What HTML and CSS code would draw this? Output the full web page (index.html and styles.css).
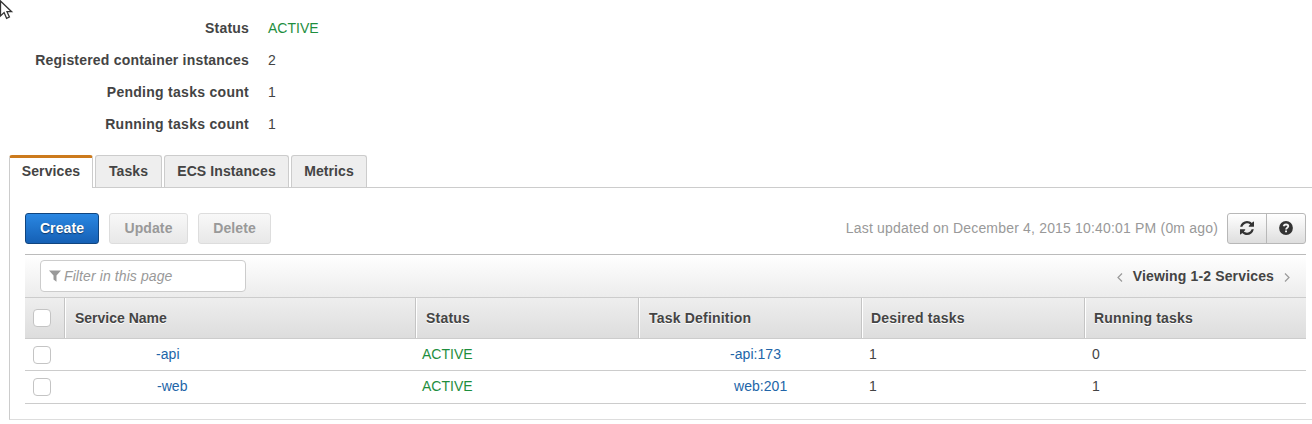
FILE: index.html
```html
<!DOCTYPE html>
<html lang="en">
<head>
<meta charset="utf-8">
<title>Cluster</title>
<link rel="stylesheet" href="styles.css">
</head>
<body>
<svg class="cursor" width="14" height="20" viewBox="0 0 14 20"><path d="M.5 1v15l3.600-3.400L6.600 18.300 9.400 17 7 11.700h4.600z" fill="#fff" stroke="#333" stroke-width="1.300"/></svg>
<dl class="details">
  <dt>Status</dt><dd class="active-text">ACTIVE</dd>
  <dt>Registered container instances</dt><dd>2</dd>
  <dt class="wide">Pending tasks count</dt><dd>1</dd>
  <dt class="wide">Running tasks count</dt><dd>1</dd>
</dl>
<nav class="tabs">
  <div class="tab tab-services selected"><span>Services</span></div>
  <div class="tab tab-tasks"><span>Tasks</span></div>
  <div class="tab tab-instances"><span>ECS Instances</span></div>
  <div class="tab tab-metrics"><span>Metrics</span></div>
</nav>
<main class="panel">
  <div class="toolbar">
    <button class="btn primary">Create</button>
    <button class="btn update" disabled>Update</button>
    <button class="btn delete" disabled>Delete</button>
    <span class="updated">Last updated on December 4, 2015 10:40:01 PM (0m ago)</span>
    <div class="icon-group">
      <button class="icon-btn" aria-label="Refresh"><svg width="14" height="14" viewBox="0 0 1536 1536"><path fill="#333" d="M1511 928q0 5-1 7-64 268-268 434.500T764 1536q-146 0-282.500-55T238 1324l-129 129q-19 19-45 19t-45-19-19-45V960q0-26 19-45t45-19h448q26 0 45 19t19 45-19 45l-137 137q71 66 161 102t187 36q134 0 250-65t186-179q11-17 53-117 8-23 30-23h192q13 0 22.500 9.500t9.500 22.500zm25-800v448q0 26-19 45t-45 19h-448q-26 0-45-19t-19-45 19-45l138-138Q969 256 768 256q-134 0-250 65T332 500q-11 17-53 117-8 23-30 23H50q-13 0-22.500-9.500T18 608v-7q65-268 270-434.500T768 0q146 0 284 55.500T1297 212l130-129q19-19 45-19t45 19 19 45z"/></svg></button>
      <button class="icon-btn" aria-label="Help"><svg width="14" height="14" viewBox="0 0 14 14"><circle cx="7" cy="7" r="6.900" fill="#333"/><path d="M4.600 5.300C5 3.900 6 3.500 7 3.500c1.300 0 2.300.7 2.300 1.800C9.300 6.700 7.100 6.800 7.100 8.400" fill="none" stroke="#f3f3f3" stroke-width="1.800"/><path d="M6.100 9.400h1.900v1.800H6.100z" fill="#f3f3f3"/></svg></button>
    </div>
  </div>
  <div class="filter-bar">
    <div class="filter"><svg width="12" height="12" viewBox="0 0 12 12"><path d="M0 .4h12L7.500 5.500v6.300L4.500 9.400V5.500z" fill="#999"/></svg><span>Filter in this page</span></div>
    <div class="pager">
      <svg width="6" height="9" viewBox="0 0 6 9"><path d="M5 .5l-4 4 4 4" fill="none" stroke="#999" stroke-width="1.200"/></svg>
      <span>Viewing 1-2 Services</span>
      <svg width="6" height="9" viewBox="0 0 6 9"><path d="M1 .5l4 4-4 4" fill="none" stroke="#999" stroke-width="1.200"/></svg>
    </div>
  </div>
  <div class="row head">
    <div class="check-cell"><span class="check"></span></div>
    <div class="snug">Service Name</div><div>Status</div><div>Task Definition</div><div class="count">Desired tasks</div><div class="count">Running tasks</div>
  </div>
  <div class="row body-row">
    <div class="check-cell"><span class="check"></span></div>
    <div class="link name-api">-api</div><div class="active-text">ACTIVE</div><div class="link def-api">-api:173</div><div>1</div><div>0</div>
  </div>
  <div class="row body-row last">
    <div class="check-cell"><span class="check"></span></div>
    <div class="link name-web">-web</div><div class="active-text">ACTIVE</div><div class="link def-web">web:201</div><div>1</div><div>1</div>
  </div>
</main>
</body>
</html>
```

FILE: styles.css
```css
* { box-sizing: border-box; }
body {
  margin: 0;
  height: 424px;
  overflow: hidden;
  background: #fff;
  color: #444;
  font: 14px/20px "Liberation Sans", Arial, sans-serif;
  letter-spacing: .2px;
}
svg { display: block; flex: none; }
.cursor { position: absolute; left: 0; top: 0; }
.details {
  display: grid;
  grid-template-columns: 249px 1fr;
  grid-auto-rows: 32px;
  column-gap: 19px;
  align-items: center;
  margin: 0;
  padding-top: 12px;
  height: 155px;
}
.details dt { text-align: right; font-weight: bold; }
.details .wide { letter-spacing: .28px; }
.details dd { margin: 0; }
.active-text { color: #1e8e3e; letter-spacing: 0; }

.tabs {
  display: flex;
  gap: 2px;
  height: 32px;
  padding-left: 9px;
}
.tab {
  height: 32px;
  padding-top: 5px;
  border: 1px solid #ccc;
  border-bottom: 0;
  border-radius: 3px 3px 0 0;
  background: #eee;
  font-weight: bold;
  letter-spacing: .1px;
  text-align: center;
}
.tab-services { width: 84px; }
.tab-tasks { width: 67px; }
.tab-instances { width: 125px; }
.tab-metrics { width: 76px; }
.tab.selected {
  position: relative;
  height: 33px;
  padding-top: 3px;
  border-top: 3px solid #cc7a1c;
  background: #fff;
}

.panel {
  height: 233px;
  margin-left: 9px;
  padding: 25px 0 0 15px;
  border: 1px solid #ccc;
  border-right: 0;
  border-bottom-color: #ddd;
}
.toolbar {
  display: flex;
  align-items: center;
  height: 31px;
  margin-right: 6px;
}
.btn {
  height: 31px;
  margin: 0 10px 0 0;
  padding: 0 0 2px;
  border: 1px solid #ddd;
  border-radius: 3px;
  background: linear-gradient(#f8f8f8, #e8e8e8);
  color: #999;
  font: bold 14px/20px "Liberation Sans", Arial, sans-serif;
  letter-spacing: .1px;
}
.update { width: 79px; }
.delete { width: 73px; }
.primary {
  width: 74px;
  border-color: #10457f;
  background: linear-gradient(#2a87e2, #1560b5);
  color: #fff;
  text-shadow: 0 1px 1px #123a68;
}
.updated { margin: 0 0 2px auto; color: #999; letter-spacing: .18px; }
.icon-group {
  display: flex;
  width: 79px;
  height: 31px;
  margin-left: 9px;
  border: 1px solid #b8b8b8;
  border-radius: 3px;
  background: linear-gradient(#fff, #dedede);
}
.icon-btn {
  display: flex;
  flex: 1;
  align-items: center;
  justify-content: center;
  padding: 0 0 2px;
  border: 0;
  background: none;
}
.icon-btn + .icon-btn { border-left: 1px solid #b8b8b8; }

.filter-bar {
  display: flex;
  align-items: center;
  justify-content: space-between;
  height: 43px;
  margin: 10px 6px 0 0;
  padding: 0 16px 0 15px;
  border-top: 1px solid #bbb;
  background: linear-gradient(#fff, #ececec);
}
.filter {
  display: flex;
  align-items: center;
  gap: 3px;
  width: 206px;
  height: 32px;
  padding-left: 8px;
  border: 1px solid #ccc;
  border-radius: 4px;
  background: #fff;
  color: #999;
  font-style: italic;
  letter-spacing: .1px;
}
.pager {
  display: flex;
  align-items: center;
  gap: 10px;
  font-weight: bold;
  letter-spacing: .15px;
  white-space: nowrap;
}
.pager svg { margin-top: 3px; }

.row {
  display: grid;
  grid-template-columns: 40px 351px 223px 223px 223px 1fr;
  margin-right: 6px;
}
.row > div { display: flex; align-items: center; }
.head {
  height: 42px;
  border-top: 1px solid #ccc;
  border-bottom: 1px solid #ccc;
  background: linear-gradient(#eee, #ddd);
  font-weight: bold;
  text-shadow: 0 1px 0 #fff;
}
.head > div {
  padding-left: 9px;
  border-right: 1px solid #c4c4c4;
  border-left: 1px solid #fff;
}
.head > div:first-child { border-left: 0; }
.head > div:last-child { border-right: 0; }
.head > .snug { letter-spacing: 0; }
.head > .count { padding-left: 8px; }
.body-row {
  height: 32px;
  border-bottom: 1px solid #ccc;
}
.body-row.last { height: 33px; }
.body-row > div { padding: 0 0 2px 7px; letter-spacing: .05px; }
.body-row > .active-text { padding-left: 6px; letter-spacing: 0; }
.row > .check-cell { padding: 0 0 0 8px; }
.check {
  width: 18px;
  height: 18px;
  border: 1px solid #c4c4c4;
  border-radius: 4px;
  background: #fff;
}
.link { color: #2265a8; }
.body-row > .name-api { padding-left: 91px; }
.body-row > .name-web { padding-left: 92px; }
.body-row > .def-api { padding-left: 91px; }
.body-row > .def-web { padding-left: 95px; }
```
